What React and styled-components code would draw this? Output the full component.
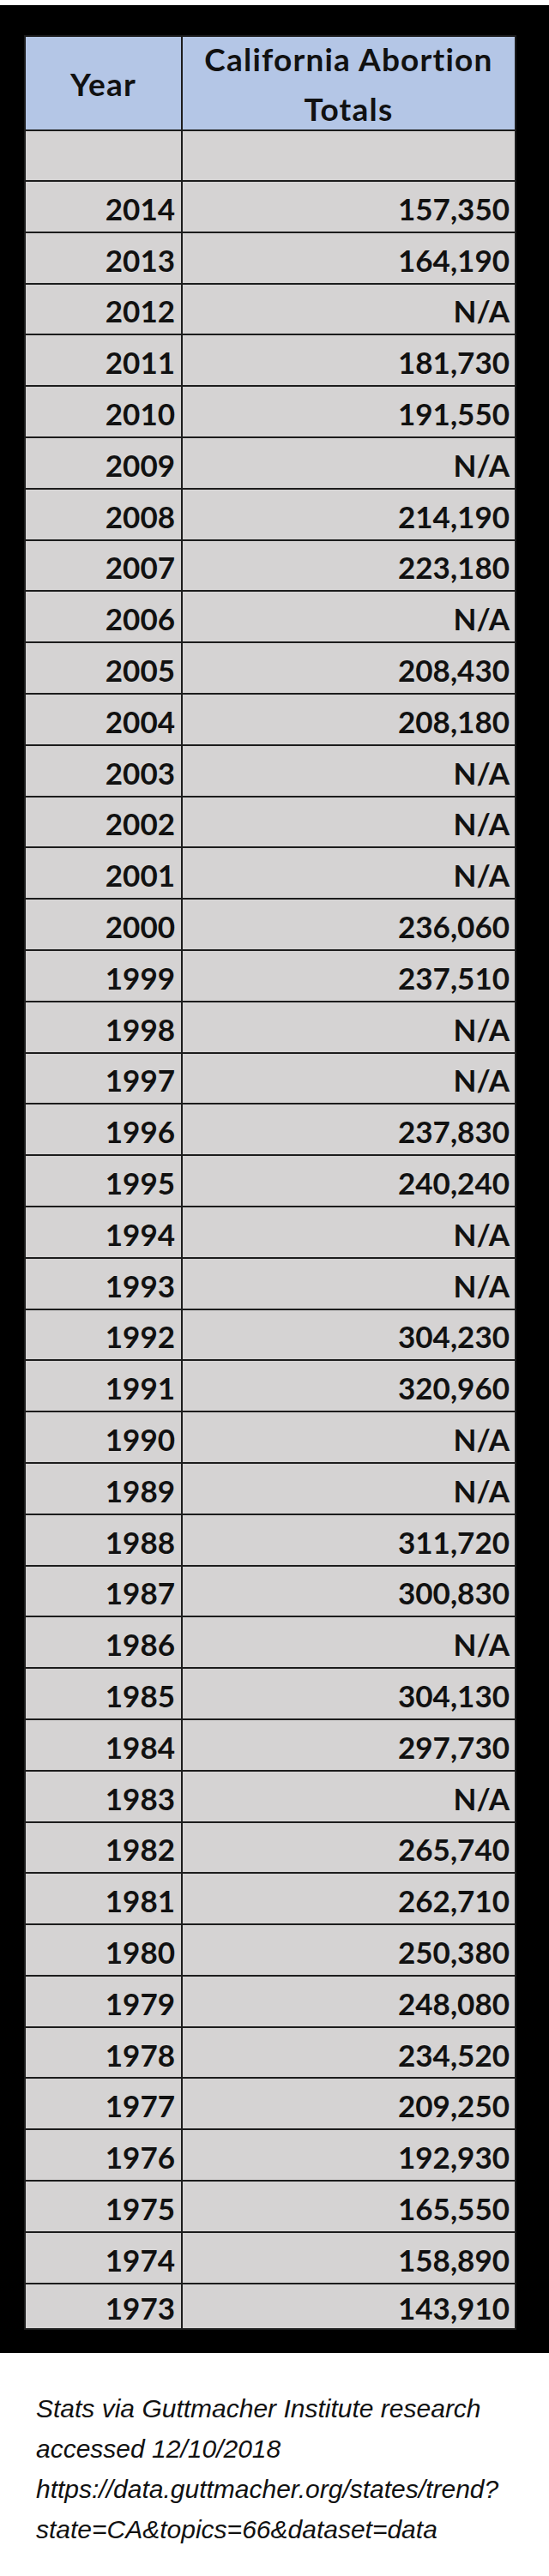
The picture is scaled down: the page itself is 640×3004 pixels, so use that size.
import React from "react";
import styled, { createGlobalStyle } from "styled-components";

const GlobalStyle = createGlobalStyle`
  html, body {
    margin: 0;
    padding: 0;
    background: #ffffff;
  }
`;

const Page = styled.div`
  width: 640px;
  min-height: 3004px;
  padding-top: 6px;
  box-sizing: border-box;
  background: #ffffff;
`;

const Frame = styled.div`
  background: #000000;
  padding: 35px 38px 27px 28px;
`;

const Table = styled.div`
  display: grid;
  grid-template-columns: 181px 387px;
  grid-template-rows: 108px 57px repeat(41, 57.8px) 51px;
  gap: 2px;
  padding: 2px;
  background: #1c1c1c;
  font-family: Lato, "Open Sans", sans-serif;
  font-weight: 700;
  font-size: 35px;
  color: #111111;
`;

const HeadCell = styled.div`
  background: #b4c6e6;
  display: flex;
  align-items: center;
  justify-content: center;
  text-align: center;
  font-size: 37px;
  letter-spacing: 1.2px;
  line-height: 58px;
  padding-top: 2px;
`;

const Cell = styled.div`
  background: #d5d3d3;
  display: flex;
  align-items: center;
  justify-content: flex-end;
  line-height: 42px;
  padding: ${(p) => (p.last ? "3px" : "4px")} ${(p) => p.pad}px 0 0;
`;

const Footer = styled.div`
  padding: 41px 0 0 42px;
  font-family: "Liberation Sans", Arial, sans-serif;
  font-style: italic;
  font-size: 30px;
  line-height: 47px;
  color: #111111;
`;

const ROWS = [
  ["2014", "157,350"],
  ["2013", "164,190"],
  ["2012", "N/A"],
  ["2011", "181,730"],
  ["2010", "191,550"],
  ["2009", "N/A"],
  ["2008", "214,190"],
  ["2007", "223,180"],
  ["2006", "N/A"],
  ["2005", "208,430"],
  ["2004", "208,180"],
  ["2003", "N/A"],
  ["2002", "N/A"],
  ["2001", "N/A"],
  ["2000", "236,060"],
  ["1999", "237,510"],
  ["1998", "N/A"],
  ["1997", "N/A"],
  ["1996", "237,830"],
  ["1995", "240,240"],
  ["1994", "N/A"],
  ["1993", "N/A"],
  ["1992", "304,230"],
  ["1991", "320,960"],
  ["1990", "N/A"],
  ["1989", "N/A"],
  ["1988", "311,720"],
  ["1987", "300,830"],
  ["1986", "N/A"],
  ["1985", "304,130"],
  ["1984", "297,730"],
  ["1983", "N/A"],
  ["1982", "265,740"],
  ["1981", "262,710"],
  ["1980", "250,380"],
  ["1979", "248,080"],
  ["1978", "234,520"],
  ["1977", "209,250"],
  ["1976", "192,930"],
  ["1975", "165,550"],
  ["1974", "158,890"],
  ["1973", "143,910"],
];

export default function App() {
  return (
    <Page>
      <GlobalStyle />
      <Frame>
        <Table>
          <HeadCell>Year</HeadCell>
          <HeadCell>
            California Abortion
            <br />
            Totals
          </HeadCell>
          <Cell pad={7} />
          <Cell pad={6} />
          {ROWS.map(([year, total], i) => {
            const last = i === ROWS.length - 1;
            return (
              <React.Fragment key={year}>
                <Cell pad={7} last={last}>{year}</Cell>
                <Cell pad={6} last={last}>{total}</Cell>
              </React.Fragment>
            );
          })}
        </Table>
      </Frame>
      <Footer>
        Stats via Guttmacher Institute research
        <br />
        accessed 12/10/2018
        <br />
        https://data.guttmacher.org/states/trend?
        <br />
        state=CA&amp;topics=66&amp;dataset=data
      </Footer>
    </Page>
  );
}
